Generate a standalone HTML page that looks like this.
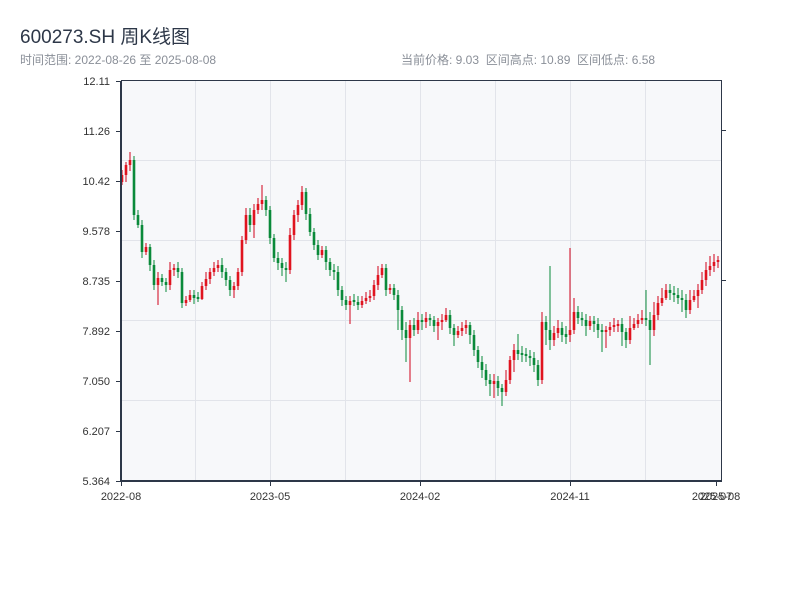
<!DOCTYPE html>
<html><head><meta charset="utf-8"><style>
body{margin:0;background:#fff;width:800px;height:600px;overflow:hidden;font-family:"Liberation Sans","Noto Sans CJK SC",sans-serif;position:relative}
.t{position:absolute;left:20px;top:22px;font-size:19px;color:#2d3748}
.s{position:absolute;top:51px;font-size:12px;color:#8a8f98}
</style></head><body>
<div class="t">600273.SH 周K线图</div>
<div class="s" style="left:20px">时间范围: 2022-08-26 至 2025-08-08</div>
<div class="s" style="left:401px">当前价格: 9.03 &nbsp;区间高点: 10.89 &nbsp;区间低点: 6.58</div>
<svg width="800" height="600" style="position:absolute;left:0;top:0" font-family="Liberation Sans, sans-serif" font-size="11" fill="#333">
<rect x="121" y="81" width="600" height="400" fill="#f7f8fa"/>
<g stroke="#e2e4ea" stroke-width="1">
<line x1="195.5" y1="81" x2="195.5" y2="481"/><line x1="270.5" y1="81" x2="270.5" y2="481"/><line x1="345.5" y1="81" x2="345.5" y2="481"/><line x1="420.5" y1="81" x2="420.5" y2="481"/><line x1="495.5" y1="81" x2="495.5" y2="481"/><line x1="570.5" y1="81" x2="570.5" y2="481"/><line x1="645.5" y1="81" x2="645.5" y2="481"/>
<line x1="121" y1="160.5" x2="721" y2="160.5"/><line x1="121" y1="240.5" x2="721" y2="240.5"/><line x1="121" y1="320.5" x2="721" y2="320.5"/><line x1="121" y1="400.5" x2="721" y2="400.5"/>
</g>
<!-- red wicks -->
<path fill="none" stroke="#d0021b" stroke-width="1" d="M122 170V185M126 162V182M130 152V171M146 243V255M158 272V305M170 262V290M174 264V276M186 296V306M190 290V302M202 282V300M206 272V290M210 268V284M214 262V276M218 260V272M234 282V298M238 268V290M242 236V276M246 208V244M254 204V238M258 198V214M262 185V210M290 228V274M294 210V240M298 200V222M302 186V210M322 246V258M350 296V324M362 296V308M366 292V304M370 290V302M374 280V300M378 266V290M382 264V278M390 284V294M410 320V382M418 312V334M426 312V328M438 318V340M442 314V330M446 308V322M458 326V338M462 322V336M466 320V334M494 374V398M506 370V396M510 356V384M514 344V372M542 312V384M554 326V346M558 320V338M570 248V342M574 298V334M590 316V330M606 326V348M610 322V336M614 318V332M618 320V332M630 316V344M634 318V330M638 314V328M642 310V324M654 302V336M658 296V320M662 288V306M666 284V300M690 290V314M694 290V302M698 284V308M702 272V294M706 262V286M710 256V276M714 254V272M718 256V268"/>
<!-- red bodies -->
<path fill="none" stroke="#e0141f" stroke-width="2.6" d="M122 175V182M126 165V175M130 160V165M146 247V252M158 278V285M170 270V285M174 268V270M186 300V303M190 295V300M202 286V299M206 279V286M210 272V279M214 268V272M218 265V268M234 286V290M238 272V286M242 240V272M246 215V240M254 210V225M258 204V210M262 200V204M290 235V270M294 215V235M298 205V215M302 192V205M322 250V255M350 301V305M362 301V305M366 298V301M370 296V298M374 285V296M378 275V285M382 268V275M390 288V290M410 325V338M418 320V330M426 318V322M438 322V326M442 320V322M446 315V320M458 331V335M462 328V331M466 325V328M494 381V384M506 380V392M510 360V380M514 350V360M542 322V380M554 333V340M558 328V333M570 330V335M574 312V330M590 321V326M606 330V332M610 327V330M614 325V327M618 324V326M630 328V340M634 324V328M638 320V324M642 318V320M654 315V330M658 303V315M662 298V303M666 290V298M690 300V310M694 296V300M698 290V296M702 280V290M706 270V280M710 266V270M714 262V266M718 260V262"/>
<!-- green wicks -->
<path fill="none" stroke="#0a8a3a" stroke-width="1" d="M134 156V220M138 210V228M142 220V258M150 244V271M154 260V290M162 274V286M166 278V292M178 262V278M182 268V308M194 290V304M198 292V302M222 258V278M226 268V286M230 276V296M250 208V232M266 196V216M270 206V244M274 234V262M278 252V270M282 258V276M286 262V282M306 188V220M310 208V236M314 228V250M318 240V260M326 246V270M330 258V276M334 264V280M338 266V296M342 286V306M346 296V310M354 294V306M358 296V310M386 264V296M394 284V300M398 290V330M402 306V340M406 322V362M414 318V336M422 314V330M430 314V326M434 316V332M450 310V334M454 324V346M470 322V344M474 330V356M478 346V368M482 356V378M486 364V386M490 374V396M498 376V396M502 384V406M518 334V360M522 346V362M526 348V362M530 350V366M534 352V372M538 360V386M546 316V345M550 266V350M562 322V342M566 326V344M578 306V324M582 312V326M586 314V336M594 316V332M598 318V338M602 324V352M622 318V346M626 328V348M646 290V326M650 312V365M670 284V300M674 286V302M678 288V304M682 290V312M686 294V318"/>
<!-- green bodies -->
<path fill="none" stroke="#0a8a3a" stroke-width="2.6" d="M134 160V215M138 215V225M142 225V252M150 247V265M154 265V285M162 278V282M166 282V285M178 268V272M182 272V303M194 295V298M198 297V299M222 265V272M226 272V280M230 280V290M250 215V225M266 200V210M270 210V238M274 238V258M278 258V263M282 263V268M286 268V270M306 192V214M310 214V232M314 232V245M318 245V255M326 250V262M330 262V270M334 270V272M338 272V290M342 290V300M346 300V305M354 300V302M358 302V305M386 268V290M394 288V295M398 295V310M402 310V330M406 330V338M414 325V330M422 320V322M430 318V320M434 320V326M450 315V328M454 328V335M470 325V335M474 335V350M478 350V362M482 362V370M486 370V380M490 380V384M498 381V388M502 388V392M518 350V354M522 353V355M526 354V356M530 356V358M534 358V365M538 365V380M546 322V330M550 330V340M562 328V335M566 334V337M578 312V318M582 318V320M586 320V326M594 321V324M598 324V330M602 330V332M622 324V332M626 332V340M646 318V320M650 320V330M670 290V293M674 293V295M678 295V298M682 298V300M686 300V310"/>
<g stroke="#2d3748" fill="none">
<line x1="121" y1="81" x2="121" y2="482" stroke-width="2"/>
<line x1="120" y1="481" x2="722" y2="481" stroke-width="2"/>
<line x1="121" y1="80.5" x2="721" y2="80.5" stroke-width="1"/>
<line x1="721.5" y1="80" x2="721.5" y2="482" stroke-width="1"/>
<path d="M116 81.5h5M116 131.5h5M116 181.5h5M116 231.5h5M116 281.5h5M116 331.5h5M116 381.5h5M116 431.5h5M116 481.5h5M721 130.5h5M721 280.5h5M121.5 481v5M270.5 481v5M420.5 481v5M570.5 481v5M716.5 481v5"/>
</g>
<g text-anchor="end">
<text x="110" y="85">12.11</text><text x="110" y="135">11.26</text><text x="110" y="185">10.42</text><text x="110" y="235">9.578</text><text x="110" y="285">8.735</text><text x="110" y="335">7.892</text><text x="110" y="385">7.050</text><text x="110" y="435">6.207</text><text x="110" y="485">5.364</text>
</g>
<g text-anchor="middle">
<text x="121" y="500">2022-08</text><text x="270" y="500">2023-05</text><text x="420" y="500">2024-02</text><text x="570" y="500">2024-11</text><text x="712" y="500">2025-07</text><text x="720" y="500">2025-08</text>
</g>
</svg>
</body></html>
